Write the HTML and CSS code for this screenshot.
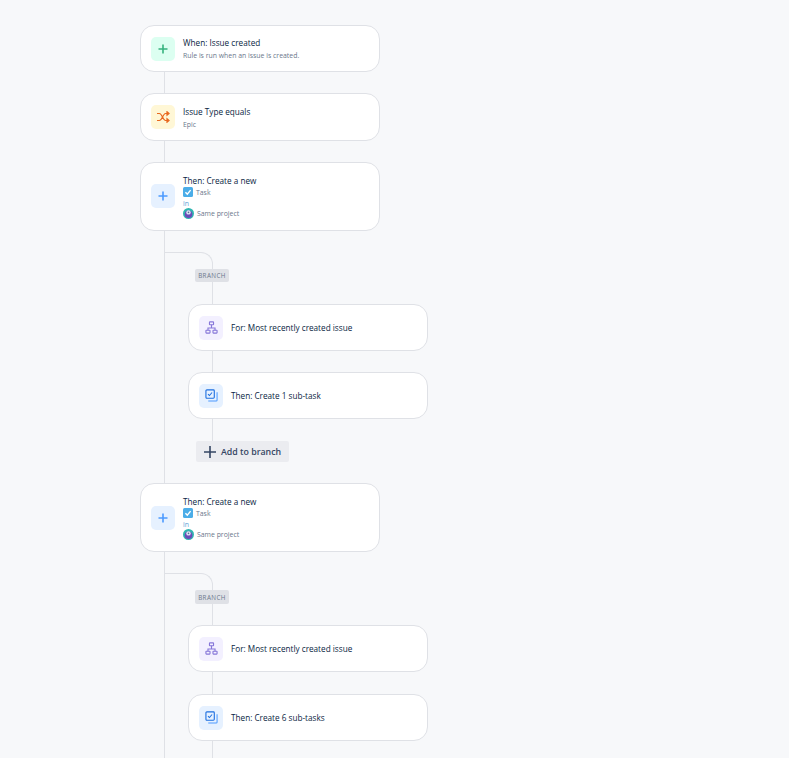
FILE: index.html
```html
<!DOCTYPE html>
<html lang="en">
<head>
<meta charset="utf-8">
<title>Automation rule</title>
<link rel="stylesheet" href="styles.css">
</head>
<body>
<main class="rule">
  <article class="card h47">
    <span class="icon green"><svg width="12" height="12" viewBox="0 0 12 12"><path d="M6 1.5v9M1.5 6h9" stroke="#36b37e" stroke-width="1.6"/></svg></span>
    <div class="body"><div class="title">When: Issue created</div><div class="sub">Rule is run when an issue is created.</div></div>
  </article>
  <div class="link"></div>
  <article class="card h48">
    <span class="icon yellow"><svg width="14" height="12" viewBox="0 0 14 12" fill="none" stroke="#e8681e" stroke-width="1.2"><path d="M1 2.5h2.5c2.5 0 3.5 7 6 7H12M1 9.5h2.5c2.5 0 3.5-7 6-7H12"/><path d="M11 .8l2 1.7-2 1.7zM11 7.8l2 1.7-2 1.7z" fill="#e8681e"/></svg></span>
    <div class="body"><div class="title">Issue Type equals</div><div class="sub">Epic</div></div>
  </article>
  <div class="link"></div>
  <article class="card h69 early">
    <span class="icon blue"><svg width="12" height="12" viewBox="0 0 12 12"><path d="M6 1.5v9M1.5 6h9" stroke="#4c9aff" stroke-width="1.6"/></svg></span>
    <div class="body">
      <div class="title">Then: Create a new</div>
      <div class="meta"><svg class="glyph" width="10" height="10" viewBox="0 0 10 10"><rect width="10" height="10" rx="1.5" fill="#4bade8"/><path d="M2.4 5.2l1.9 1.9 3.3-4" fill="none" stroke="#fff" stroke-width="1.4"/></svg><span>Task</span></div>
      <div class="in">in</div>
      <div class="meta project"><svg class="glyph" width="11" height="11" viewBox="0 0 11 11"><circle cx="5.5" cy="5.5" r="5.5" fill="#2fb5b0"/><circle cx="5.5" cy="6.2" r="3.8" fill="#6b4bb8"/><circle cx="5.5" cy="4.4" r="2.2" fill="#dfe8f5"/><circle cx="5.5" cy="4.4" r=".8" fill="#5a6b9a"/></svg><span>Same project</span></div>
    </div>
  </article>

  <section class="branch">
    <div class="curve"></div>
    <div class="tag-row"><span class="tag">BRANCH</span></div>
    <div class="flow">
      <article class="card h47">
        <span class="icon purple"><svg width="13" height="13" viewBox="0 0 14 14" fill="none" stroke="#8777d9" stroke-width="1.2"><rect x="4.8" y="1" width="4.4" height="3" rx=".5"/><rect x="1" y="10" width="4.4" height="3" rx=".5"/><rect x="8.6" y="10" width="4.4" height="3" rx=".5"/><path d="M7 4v3.5M3.2 10V7.5h7.6V10"/></svg></span>
        <div class="body"><div class="title">For: Most recently created issue</div></div>
      </article>
      <div class="link"></div>
      <article class="card h47">
        <span class="icon blue"><svg width="13" height="13" viewBox="0 0 14 14" fill="none" stroke="#4c9aff" stroke-width="1.1"><rect x="1" y="1" width="9" height="9" rx="1" stroke="#1d6fe0" stroke-width="1.2"/><path d="M13 3.5V12a1 1 0 0 1-1 1H3.5"/><path d="M3.2 5.4l1.6 1.6 2.8-3.2" stroke="#1d6fe0"/></svg></span>
        <div class="body"><div class="title">Then: Create 1 sub-task</div></div>
      </article>
      <div class="link to-add"></div>
      <button class="add" type="button"><svg width="12" height="12" viewBox="0 0 12 12"><path d="M6 0v12M0 6h12" stroke="#344563" stroke-width="1.6"/></svg>Add to branch</button>
    </div>
  </section>

  <article class="card h69">
    <span class="icon blue"><svg width="12" height="12" viewBox="0 0 12 12"><path d="M6 1.5v9M1.5 6h9" stroke="#4c9aff" stroke-width="1.6"/></svg></span>
    <div class="body">
      <div class="title">Then: Create a new</div>
      <div class="meta"><svg class="glyph" width="10" height="10" viewBox="0 0 10 10"><rect width="10" height="10" rx="1.5" fill="#4bade8"/><path d="M2.4 5.2l1.9 1.9 3.3-4" fill="none" stroke="#fff" stroke-width="1.4"/></svg><span>Task</span></div>
      <div class="in">in</div>
      <div class="meta project"><svg class="glyph" width="11" height="11" viewBox="0 0 11 11"><circle cx="5.5" cy="5.5" r="5.5" fill="#2fb5b0"/><circle cx="5.5" cy="6.2" r="3.8" fill="#6b4bb8"/><circle cx="5.5" cy="4.4" r="2.2" fill="#dfe8f5"/><circle cx="5.5" cy="4.4" r=".8" fill="#5a6b9a"/></svg><span>Same project</span></div>
    </div>
  </article>

  <section class="branch last">
    <div class="curve"></div>
    <div class="tag-row"><span class="tag">BRANCH</span></div>
    <div class="flow">
      <article class="card h47">
        <span class="icon purple"><svg width="13" height="13" viewBox="0 0 14 14" fill="none" stroke="#8777d9" stroke-width="1.2"><rect x="4.8" y="1" width="4.4" height="3" rx=".5"/><rect x="1" y="10" width="4.4" height="3" rx=".5"/><rect x="8.6" y="10" width="4.4" height="3" rx=".5"/><path d="M7 4v3.5M3.2 10V7.5h7.6V10"/></svg></span>
        <div class="body"><div class="title">For: Most recently created issue</div></div>
      </article>
      <div class="link tall"></div>
      <article class="card h47">
        <span class="icon blue"><svg width="13" height="13" viewBox="0 0 14 14" fill="none" stroke="#4c9aff" stroke-width="1.1"><rect x="1" y="1" width="9" height="9" rx="1" stroke="#1d6fe0" stroke-width="1.2"/><path d="M13 3.5V12a1 1 0 0 1-1 1H3.5"/><path d="M3.2 5.4l1.6 1.6 2.8-3.2" stroke="#1d6fe0"/></svg></span>
        <div class="body"><div class="title">Then: Create 6 sub-tasks</div></div>
      </article>
      <div class="link end"></div>
    </div>
  </section>
</main>
</body>
</html>
```
FILE: styles.css
```css
* { box-sizing: border-box; }
html, body { margin: 0; height: 758px; overflow: hidden; background: #f7f8fa; }
body { font-family: "Open Sans", "Noto Sans", sans-serif; color: #172b4d; }
.rule { display: flex; flex-direction: column; width: 240px; margin-left: 140px; padding-top: 25px; }
.card { display: flex; align-items: center; gap: 8px; width: 240px; padding: 0 10px; background: #fff; border: 1px solid #dfe1e6; border-radius: 14px; flex: none; }
.h47 { height: 47px; }
.h48 { height: 48px; }
.h48 .body { padding-top: 2px; }
.h69 { height: 69px; }
.early .icon { margin-bottom: 1px; }
.icon { display: flex; align-items: center; justify-content: center; flex: none; width: 24px; height: 24px; border-radius: 5px; }
.green { background: #dcfff1; }
.yellow { background: #fff7d6; }
.blue { background: #e6f1ff; }
.purple { background: #f3f0ff; }
.body { display: flex; flex-direction: column; min-width: 0; }
.title { font-size: 8.2px; line-height: 12px; color: #091e42; white-space: nowrap; }
.sub { font-size: 6.9px; line-height: 10px; margin-top: 2px; color: #6b778c; white-space: nowrap; }
.meta { display: flex; align-items: center; gap: 3px; height: 11px; font-size: 6.9px; color: #6b778c; white-space: nowrap; }
.meta + .in { margin-top: 1px; }
.project { margin-top: -1px; }
.in { font-size: 6.9px; line-height: 10px; color: #5e9ed6; }
.glyph { flex: none; }
.link { width: 1px; height: 21px; margin-left: 24px; background: #dfe1e6; flex: none; }
.branch { margin-left: 24px; border-left: 1px solid #dfe1e6; padding-top: 21px; display: flex; flex-direction: column; width: 264px; margin-right: -48px; height: 252px; flex: none; }
.branch.last { height: 300px; }
.curve { width: 48px; height: 17px; border-top: 1px solid #dfe1e6; border-right: 1px solid #dfe1e6; border-top-right-radius: 12px; flex: none; }
.tag-row { position: relative; height: 35px; width: 48px; border-right: 1px solid #dfe1e6; flex: none; }
.tag { position: absolute; top: 0; left: 30px; height: 13px; width: 34px; display: flex; align-items: center; justify-content: center; font-size: 6.3px; letter-spacing: .4px; color: #6b778c; background: #dfe1e6; border-radius: 2px; }
.last .tag { height: 14px; }
.flow { display: flex; flex-direction: column; margin-left: 23px; align-items: flex-start; }
.tall { height: 22px; }
.to-add { height: 22px; }
.end { height: 40px; }
.add { display: flex; align-items: center; gap: 5px; width: 93px; height: 21px; margin-left: 8px; padding: 0 0 0 8px; border: 0; border-radius: 2px; background: #ebecf0; font: 600 8.8px "Open Sans", sans-serif; color: #344563; }
```
